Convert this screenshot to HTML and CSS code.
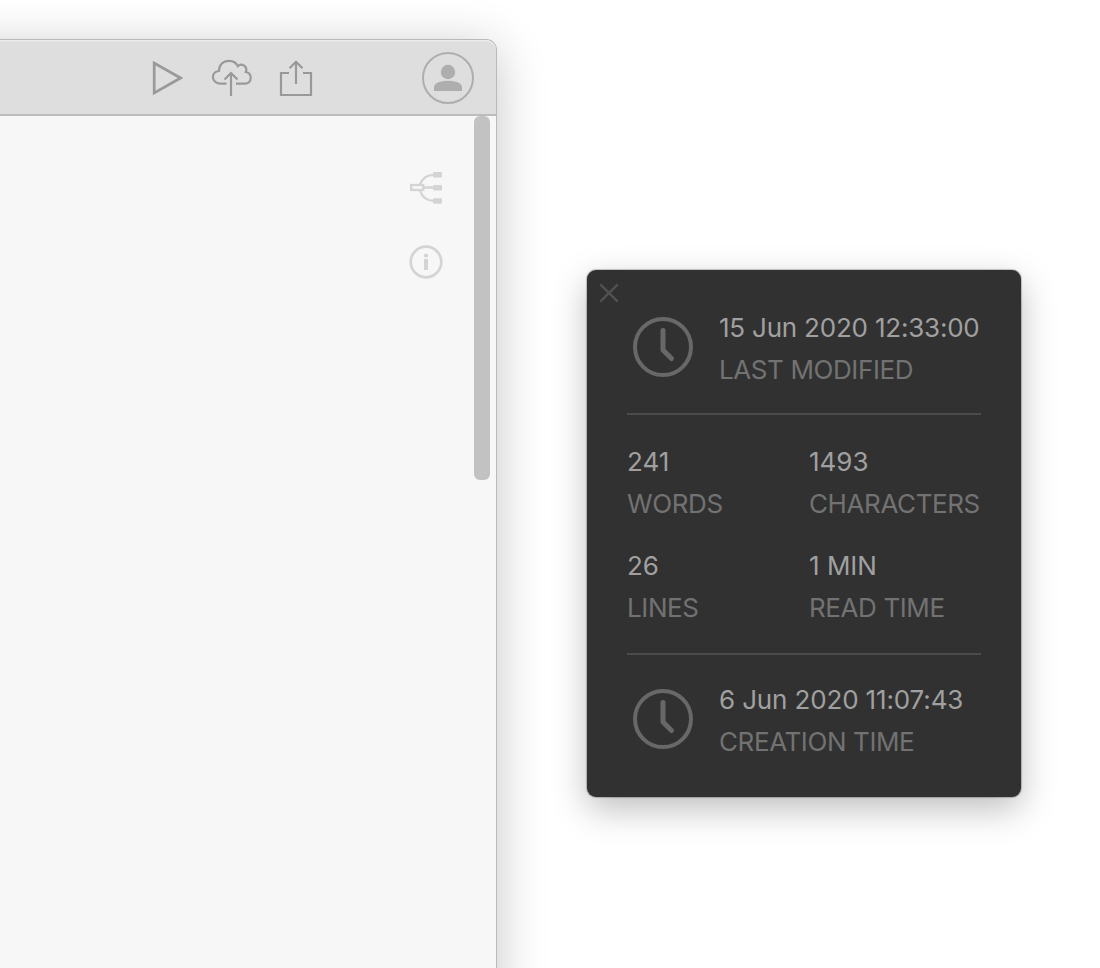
FILE: index.html
```html
<!DOCTYPE html>
<html lang="en">
<head>
<meta charset="utf-8">
<title>Document info</title>
<link rel="stylesheet" href="styles.css">
</head>
<body>
<main class="desktop">
  <section class="editor">
    <header class="toolbar">
      <svg class="tool play" width="32" height="38" viewBox="0 0 32 38"><path d="M3.2 4V34L29.6 19Z"/></svg>
      <svg class="tool cloud" width="42" height="40" viewBox="0 0 42 40"><path d="M15.5 24.7H10C5.2 24.7 1.9 21.8 1.9 18C1.9 14.7 4.6 12.1 8 11.8C8 5.8 12.3 1.8 18 1.8C22.4 1.8 25.5 4 26.8 7.2C30.8 3.4 37 7.3 34.8 13C37.8 13.6 39.7 16 39.7 18.8C39.7 22.2 37.4 24.7 34 24.7H25M20 37V14M13.5 20.5L20 14L26.5 20.5"/></svg>
      <svg class="tool share" width="34" height="40" viewBox="0 0 34 40"><path d="M10 14H2V36H32V14H24M17 25V3M10.5 9.3L17 2.8L23.5 9.3"/></svg>
      <svg class="account" width="52" height="52" viewBox="0 0 52 52"><circle class="ring" cx="26" cy="26" r="25"/><circle cx="26" cy="20" r="7.2"/><path d="M12 39V35C12 26.5 40 26.5 40 35V39Z"/></svg>
    </header>
    <div class="page">
      <nav class="side">
        <svg width="34" height="34" viewBox="0 0 34 34"><path class="line" d="M14 16.5H25M11 13.5C13 8 17 3.8 25 3.8M11 19.5C13 26 17 29.9 25 29.9"/><rect class="line" x="2.2" y="14" width="12" height="5"/><rect x="24" y="1" width="9" height="5.5" rx="1"/><rect x="24" y="14" width="9" height="5.5" rx="1"/><rect x="24" y="27.2" width="9" height="5.5" rx="1"/></svg>
        <svg width="34" height="34" viewBox="0 0 34 34"><circle class="ring" cx="17" cy="17" r="15.3"/><circle cx="17" cy="10.6" r="2.1"/><path d="M15 14h4v11h-4z"/></svg>
      </nav>
      <div class="scroll"></div>
    </div>
  </section>
  <section class="info">
    <svg class="close" width="20" height="20" viewBox="0 0 20 20"><path d="M1.3 1.3L18.7 18.7M18.7 1.3L1.3 18.7"/></svg>
    <div class="stamp">
      <svg class="clock" width="60" height="60" viewBox="0 0 60 60"><circle cx="30" cy="30" r="28"/><path d="M30 13.5V33L38.5 41.5"/></svg>
      <div><p class="value time-modified">15 Jun 2020 12:33:00</p><p class="label">LAST MODIFIED</p></div>
    </div>
    <div class="stats">
      <div><p class="value">241</p><p class="label">WORDS</p></div>
      <div><p class="value">1493</p><p class="label">CHARACTERS</p></div>
      <div><p class="value">26</p><p class="label">LINES</p></div>
      <div><p class="value">1 MIN</p><p class="label">READ TIME</p></div>
    </div>
    <div class="stamp">
      <svg class="clock" width="60" height="60" viewBox="0 0 60 60"><circle cx="30" cy="30" r="28"/><path d="M30 13.5V33L38.5 41.5"/></svg>
      <div><p class="value time-created">6 Jun 2020 11:07:43</p><p class="label">CREATION TIME</p></div>
    </div>
  </section>
</main>
</body>
</html>
```
FILE: styles.css
```css
* { box-sizing: border-box; }
body { margin: 0; background: #fff; font-family: Inter, "Liberation Sans", sans-serif; }
p { margin: 0; }
svg { display: block; flex: none; }
.desktop { position: relative; width: 1100px; height: 968px; overflow: hidden; }
.editor {
  position: absolute; left: -100px; top: 40px; width: 596px; height: 1100px;
  display: flex; flex-direction: column; overflow: visible;
  border-radius: 10px; background: #f7f7f7;
  box-shadow: 0 0 0 1px #b9b9b9, 0 8px 50px rgba(0,0,0,.24);
}
.toolbar {
  display: flex; align-items: flex-start; height: 76px; padding: 12px 22px 0 251px;
  background: #dedede; border-bottom: 2px solid #bcbcbc; border-radius: 10px 10px 0 0;
  box-shadow: inset 0 1.5px 0 #ebebeb;
}
.tool { fill: none; stroke: #999; stroke-width: 2.2; }
.play { margin-top: 7px; stroke-width: 2.7; }
.cloud { margin: 7px 0 0 28px; }
.share { margin: 7px 0 0 26px; }
.account { margin-left: auto; fill: #aeaeae; }
.account .ring { fill: none; stroke: #aeaeae; stroke-width: 2; }
.page { display: flex; flex: 1; justify-content: flex-end; }
.side { display: flex; flex-direction: column; gap: 40px; margin-top: 55px; fill: #d4d4d4; }
.side .line { fill: none; stroke: #d4d4d4; stroke-width: 2.3; }
.side .ring { fill: none; stroke: #d4d4d4; stroke-width: 2.7; }
.scroll { width: 16px; height: 364px; margin: 0 6px 0 31px; border-radius: 6px; background: #c2c2c2; }
.info {
  position: absolute; left: 587px; top: 270px; width: 434px; height: 527px;
  padding: 37px 40px 0; border-radius: 9px; background: #313131; color: #a0a0a0;
  box-shadow: 0 0 1px 1px rgba(0,0,0,.22), 0 12px 35px rgba(0,0,0,.26);
}
.close { position: absolute; left: 12px; top: 13px; fill: none; stroke: #515151; stroke-width: 2.4; }
.stamp { display: flex; gap: 26px; height: 84px; padding-left: 6px; }
.clock { margin-top: 10px; fill: none; stroke: #686868; stroke-width: 4; }
.clock path { stroke-width: 5; stroke-linecap: round; stroke-linejoin: round; }
.value, .label { font-size: 26px; line-height: 42px; white-space: nowrap; }
.label { color: #727272; letter-spacing: -0.4px; }
.time-modified { letter-spacing: -0.21px; }
.time-created { letter-spacing: -0.14px; }
.stats {
  display: grid; grid-template-columns: 182px 1fr; row-gap: 20px;
  margin: 22px 0 24px; padding: 26px 0 24px;
  border-top: 2px solid #4b4b4b; border-bottom: 2px solid #4b4b4b;
}
```
